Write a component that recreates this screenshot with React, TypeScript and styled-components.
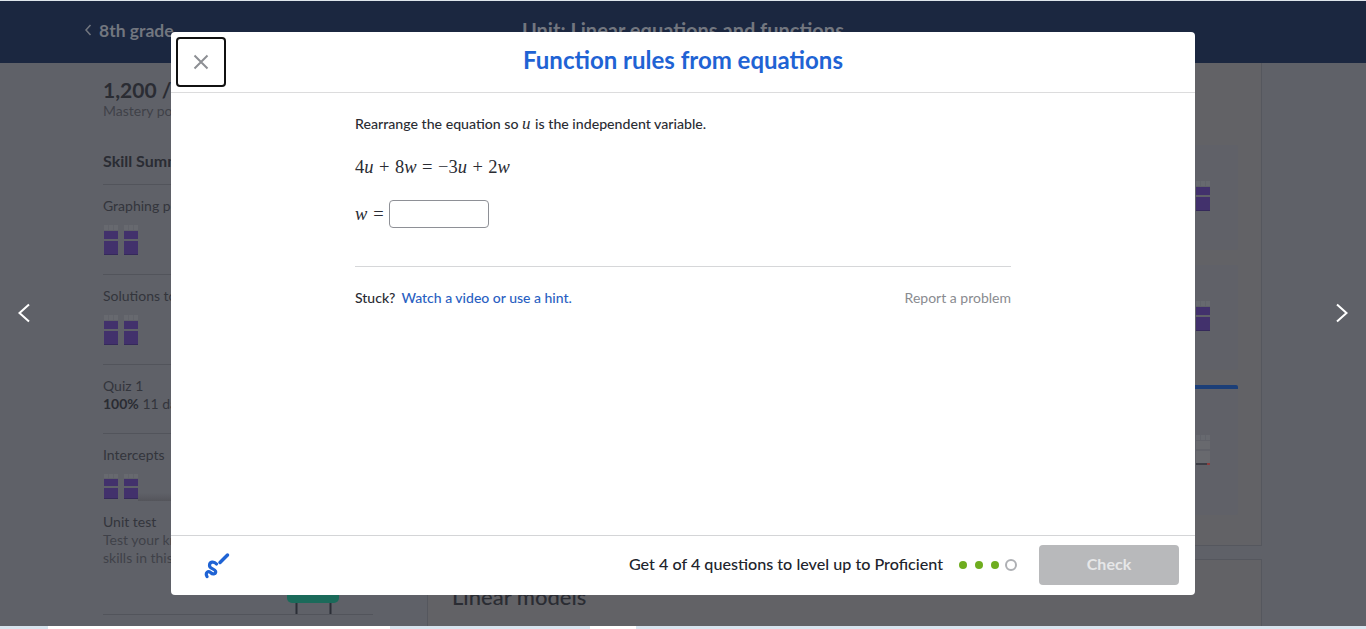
import React from 'react';
import styled, { createGlobalStyle } from 'styled-components';

const GlobalStyle = createGlobalStyle`
  html, body {
    margin: 0;
    padding: 0;
    overflow: hidden;
  }
  * {
    box-sizing: border-box;
  }
`;

const Page = styled.div`
  height: 629px;
  display: flex;
  flex-direction: column;
  font-family: Lato, 'Noto Sans', sans-serif;
  background: #5f6168;
  color: #34363d;
`;

const TopEdge = styled.div`
  height: 1px;
  background: #dfe6ec;
`;

const Stage = styled.div`
  position: relative;
  flex: 1;
  min-height: 0;
  overflow: hidden;
`;

const BottomEdge = styled.div`
  height: 3px;
  display: grid;
  grid-template-columns: 48px 342px 200px 46px 1fr;
`;

const EdgePart = styled.div<{ $light?: boolean }>`
  background: ${(p) => (p.$light ? '#ffffff' : '#d8e4ee')};
`;

/* page behind the dialog */
const TopBar = styled.header`
  height: 62px;
  background: #1b2740;
  display: grid;
  grid-template-columns: 1fr auto 1fr;
  align-items: center;
  padding: 0 84px;
  color: #72767f;
  font-weight: 700;
`;

const BackLink = styled.div`
  display: flex;
  align-items: center;
  gap: 7px;
  font-size: 17.5px;
  padding-bottom: 4px;
`;

const UnitTitle = styled.div`
  font-size: 20px;
  padding-bottom: 5px;
`;

const Columns = styled.div`
  display: flex;
  padding-left: 103px;
  gap: 54px;
`;

const Sidebar = styled.aside`
  width: 270px;
  flex: none;
  padding-top: 14px;
`;

const Score = styled.div`
  font-size: 21px;
  line-height: 25px;
  font-weight: 700;
  color: #2a2c33;
`;

const Muted = styled.div`
  font-size: 14px;
  line-height: 18px;
  color: #3f4149;
`;

const SummaryTitle = styled.div`
  margin-top: 31px;
  padding-bottom: 13px;
  font-size: 16px;
  line-height: 20px;
  font-weight: 700;
  color: #2a2c33;
  border-bottom: 1px solid #52545b;
`;

const SkillRow = styled.div<{ $h: number; $plain?: boolean }>`
  height: ${(p) => p.$h}px;
  padding-top: 12px;
  border-bottom: ${(p) => (p.$plain ? '0' : '1px solid #52545b')};
  font-size: 14px;
  line-height: 18px;
  color: #33353c;
`;

const Strong = styled.strong`
  font-weight: 700;
  color: #2a2c33;
`;

const SkillBars = styled.div`
  display: flex;
  gap: 6px;
  margin: 10px 0 0 1px;
`;

const BarColumn = styled.div`
  width: 14px;
  display: flex;
  flex-direction: column;
`;

const BarTop = styled.div`
  height: 5px;
  margin-bottom: 1px;
  background: repeating-linear-gradient(90deg, #67696f 0 4px, #61636a 4px 5px);
`;

const BarCell = styled.div<{ $h: number; $grey?: boolean; $base?: boolean }>`
  height: ${(p) => p.$h}px;
  margin-bottom: 2px;
  background: ${(p) =>
    p.$grey
      ? p.$base
        ? 'linear-gradient(90deg, #3c3d45 0 11px, #8c3b3c 11px) bottom / 100% 2px no-repeat, #68696e'
        : '#68696e'
      : '#42316c'};
  box-shadow: ${(p) => (p.$base && !p.$grey ? 'inset 0 -1px 0 #35295a' : 'none')};
`;

const IntroRow = styled.div`
  height: 37px;
  display: flex;
  overflow: hidden;
`;

const ShadowFade = styled.div`
  flex: 1;
  align-self: flex-end;
  height: 8px;
  background: linear-gradient(180deg, #5f6168, #54555b);
`;

const UnitTest = styled.div`
  padding-top: 12px;
  height: 114px;
  border-bottom: 1px solid #52545b;
  font-size: 14px;
  line-height: 18px;
  color: #33353c;
`;

const SeatArt = styled.svg`
  display: block;
  margin-left: 184px;
`;

const Main = styled.main`
  width: 835px;
  flex: none;
`;

const Panel = styled.section`
  height: 483px;
  border: 1px solid #55575e;
  border-top: 0;
  background: #626266;
  padding: 82px 23px 0 0;
  display: flex;
  flex-direction: column;
  gap: 15px;
`;

const LessonCard = styled.div<{ $h: number; $active?: boolean }>`
  height: ${(p) => p.$h}px;
  margin-left: 24px;
  background: #606168;
  border-top: ${(p) => (p.$active ? '4px solid #1c3f78' : '0')};
  border-radius: 2px;
  display: flex;
  justify-content: flex-end;
  padding: ${(p) => (p.$active ? '36px' : '26px')} 28px 0 0;
`;

const NextPanel = styled.section`
  margin-top: 13px;
  height: 100px;
  border: 1px solid #55575e;
  background: #626266;
  padding: 23px 0 0 24px;
  font-size: 22px;
  line-height: 28px;
  font-weight: 500;
  color: #2a2c33;
`;

const SideArrow = styled.button<{ $side: 'left' | 'right' }>`
  position: absolute;
  top: 302px;
  ${(p) => p.$side}: 17px;
  width: 14px;
  height: 20px;
  padding: 0;
  border: 0;
  background: none;
  display: flex;
`;

/* dialog */
const Modal = styled.div`
  position: absolute;
  left: 171px;
  top: 31px;
  width: 1024px;
  height: 563px;
  background: #ffffff;
  border-radius: 4px;
  display: flex;
  flex-direction: column;
  overflow: hidden;
`;

const ModalHeader = styled.div`
  position: relative;
  height: 61px;
  flex: none;
  border-bottom: 1px solid #dcdcdd;
  display: flex;
  justify-content: center;
  padding-top: 12px;
`;

const CloseButton = styled.button`
  position: absolute;
  left: 5px;
  top: 5px;
  width: 50px;
  height: 50px;
  background: #ffffff;
  border: 2px solid #111111;
  border-radius: 4px;
  padding: 0;
  display: flex;
  align-items: center;
  justify-content: center;
`;

const Title = styled.h1`
  margin: 0;
  font-size: 24px;
  line-height: 32px;
  font-weight: 700;
  color: #1f63d4;
`;

const ModalBody = styled.div`
  flex: 1;
  width: 656px;
  margin: 0 auto;
  padding-top: 21px;
  color: #2a2c33;
`;

const Prompt = styled.p`
  margin: 0;
  font-size: 14.15px;
  line-height: 20px;
  font-weight: 500;
`;

const MathVar = styled.i`
  font-family: 'Liberation Serif', serif;
  font-size: 17px;
  line-height: 1;
  margin-right: 1px;
`;

const Equation = styled.div`
  margin-top: 21px;
  height: 24px;
  font-family: 'Liberation Serif', serif;
  font-size: 18.5px;
  line-height: 24px;
`;

const MathOp = styled.span`
  margin: 0 5.5px;
`;

const AnswerRow = styled.div`
  margin-top: 21px;
  height: 28px;
  display: flex;
  align-items: center;
  gap: 5px;
  font-family: 'Liberation Serif', serif;
  font-size: 18.5px;
`;

const AnswerEquals = styled.span`
  margin-left: 1px;
`;

const AnswerInput = styled.input`
  width: 100px;
  height: 28px;
  border: 1px solid #8e9096;
  border-radius: 4px;
  background: #ffffff;
`;

const Rule = styled.hr`
  margin: 38px 0 0;
  border: 0;
  border-top: 1px solid #d6d7d9;
`;

const HelpRow = styled.div`
  margin-top: 21px;
  display: flex;
  justify-content: space-between;
  font-size: 14px;
  line-height: 20px;
`;

const Stuck = styled.div`
  display: flex;
  gap: 6px;
  font-weight: 500;
`;

const HintLink = styled.a`
  color: #2a5fc2;
`;

const Report = styled.a`
  color: #898b90;
`;

const ModalFooter = styled.div`
  height: 60px;
  flex: none;
  border-top: 1px solid #d4d5d7;
  display: flex;
  align-items: center;
  padding: 0 16px 1px 33px;
`;

const ProgressText = styled.div`
  margin-left: auto;
  padding-bottom: 4px;
  font-size: 16.15px;
  font-weight: 500;
  color: #21242c;
`;

const Dots = styled.div`
  margin: 0 22px 0 16px;
  display: flex;
  align-items: center;
  gap: 8px;
`;

const Dot = styled.span<{ $empty?: boolean }>`
  width: ${(p) => (p.$empty ? 12 : 8)}px;
  height: ${(p) => (p.$empty ? 12 : 8)}px;
  margin-left: ${(p) => (p.$empty ? -2 : 0)}px;
  border-radius: 50%;
  background: ${(p) => (p.$empty ? '#ffffff' : '#6fad1f')};
  border: ${(p) => (p.$empty ? '2px solid #aeb0b4' : '0')};
`;

const CheckButton = styled.button`
  width: 140px;
  height: 40px;
  border: 0;
  border-radius: 4px;
  padding: 0 0 3px;
  background: #b8b9bb;
  color: #e6e7e8;
  font-family: inherit;
  font-size: 16px;
  font-weight: 700;
`;

const Chevron = ({ flip }: { flip?: boolean }) => (
  <svg width="14" height="20" viewBox="0 0 14 20" fill="none">
    <path d={flip ? 'M2 1.500l9.500 8.500-9.500 8.500' : 'M12 1.500L2.500 10l9.500 8.500'} stroke="#ffffff" strokeWidth="2" />
  </svg>
);

const Bars = ({ grey }: { grey?: boolean }) => (
  <SkillBars>
    {[0, 1].map((i) => (
      <BarColumn key={i}>
        <BarTop />
        <BarCell $h={8} $grey={grey} />
        <BarCell $h={14} $grey={grey} $base />
      </BarColumn>
    ))}
  </SkillBars>
);

const App = () => {
  return (
    <Page>
      <GlobalStyle />
      <TopEdge />
      <Stage>
        <TopBar>
          <BackLink>
            <svg width="8" height="12" viewBox="0 0 8 12" fill="none">
              <path d="M6.500 1L2 6l4.500 5" stroke="#72767f" strokeWidth="1.5" />
            </svg>
            8th grade
          </BackLink>
          <UnitTitle>Unit: Linear equations and functions</UnitTitle>
        </TopBar>
        <Columns>
          <Sidebar>
            <Score>1,200 / 1,500</Score>
            <Muted>Mastery points</Muted>
            <SummaryTitle>Skill Summary</SummaryTitle>
            <SkillRow $h={90}>
              Graphing proportional relationships
              <Bars />
            </SkillRow>
            <SkillRow $h={90}>
              Solutions to linear equations
              <Bars />
            </SkillRow>
            <SkillRow $h={69}>
              Quiz 1
              <br />
              <Strong>100%</Strong> 11 days ago
            </SkillRow>
            <SkillRow $h={67} $plain>
              Intercepts
              <IntroRow>
                <Bars />
                <ShadowFade />
              </IntroRow>
            </SkillRow>
            <UnitTest>
              Unit test
              <Muted>Test your knowledge of all the</Muted>
              <Muted>skills in this unit</Muted>
              <SeatArt width="52" height="47" viewBox="0 0 52 47">
                <path d="M0 20h52v11a5 5 0 0 1-5 5H5a5 5 0 0 1-5-5z" fill="#1b6a5a" />
                <path d="M9.500 36v11M43.500 36v11" stroke="#2b2e36" strokeWidth="2" />
              </SeatArt>
            </UnitTest>
          </Sidebar>
          <Main>
            <Panel>
              <LessonCard $h={105}>
                <Bars />
              </LessonCard>
              <LessonCard $h={105}>
                <Bars />
              </LessonCard>
              <LessonCard $h={130} $active>
                <Bars grey />
              </LessonCard>
            </Panel>
            <NextPanel>Linear models</NextPanel>
          </Main>
        </Columns>
        <SideArrow $side="left">
          <Chevron />
        </SideArrow>
        <SideArrow $side="right">
          <Chevron flip />
        </SideArrow>
        <Modal>
          <ModalHeader>
            <CloseButton aria-label="Close">
              <svg width="16" height="16" viewBox="0 0 16 16" fill="none">
                <path d="M1.500 1.500l13 13M14.500 1.500l-13 13" stroke="#8d8f94" strokeWidth="2" />
              </svg>
            </CloseButton>
            <Title>Function rules from equations</Title>
          </ModalHeader>
          <ModalBody>
            <Prompt>
              Rearrange the equation so <MathVar>u</MathVar> is the independent variable.
            </Prompt>
            <Equation>
              4<i>u</i>
              <MathOp>+</MathOp>8<i>w</i>
              <MathOp>=</MathOp>−3<i>u</i>
              <MathOp>+</MathOp>2<i>w</i>
            </Equation>
            <AnswerRow>
              <i>w</i>
              <AnswerEquals>=</AnswerEquals>
              <AnswerInput type="text" aria-label="Answer" />
            </AnswerRow>
            <Rule />
            <HelpRow>
              <Stuck>
                Stuck?
                <HintLink>Watch a video or use a hint.</HintLink>
              </Stuck>
              <Report>Report a problem</Report>
            </HelpRow>
          </ModalBody>
          <ModalFooter>
            <svg width="27" height="29" viewBox="204 550 27 29" fill="none" stroke="#1f63d4" strokeLinecap="round">
              <path
                d="M207 575.500C205 572 208 569.500 210.500 571.500C213 574 216.500 573 215.500 570C214.500 567.500 209.500 568 209.500 564.500C209.500 560.500 214 560 216.500 563"
                strokeWidth="3.200"
              />
              <path d="M220 561.500l7.500-7.500" strokeWidth="3.500" />
            </svg>
            <ProgressText>Get 4 of 4 questions to level up to Proficient</ProgressText>
            <Dots>
              <Dot />
              <Dot />
              <Dot />
              <Dot $empty />
            </Dots>
            <CheckButton disabled>Check</CheckButton>
          </ModalFooter>
        </Modal>
      </Stage>
      <BottomEdge>
        <EdgePart />
        <EdgePart $light />
        <EdgePart />
        <EdgePart $light />
        <EdgePart />
      </BottomEdge>
    </Page>
  );
};

export default App;
